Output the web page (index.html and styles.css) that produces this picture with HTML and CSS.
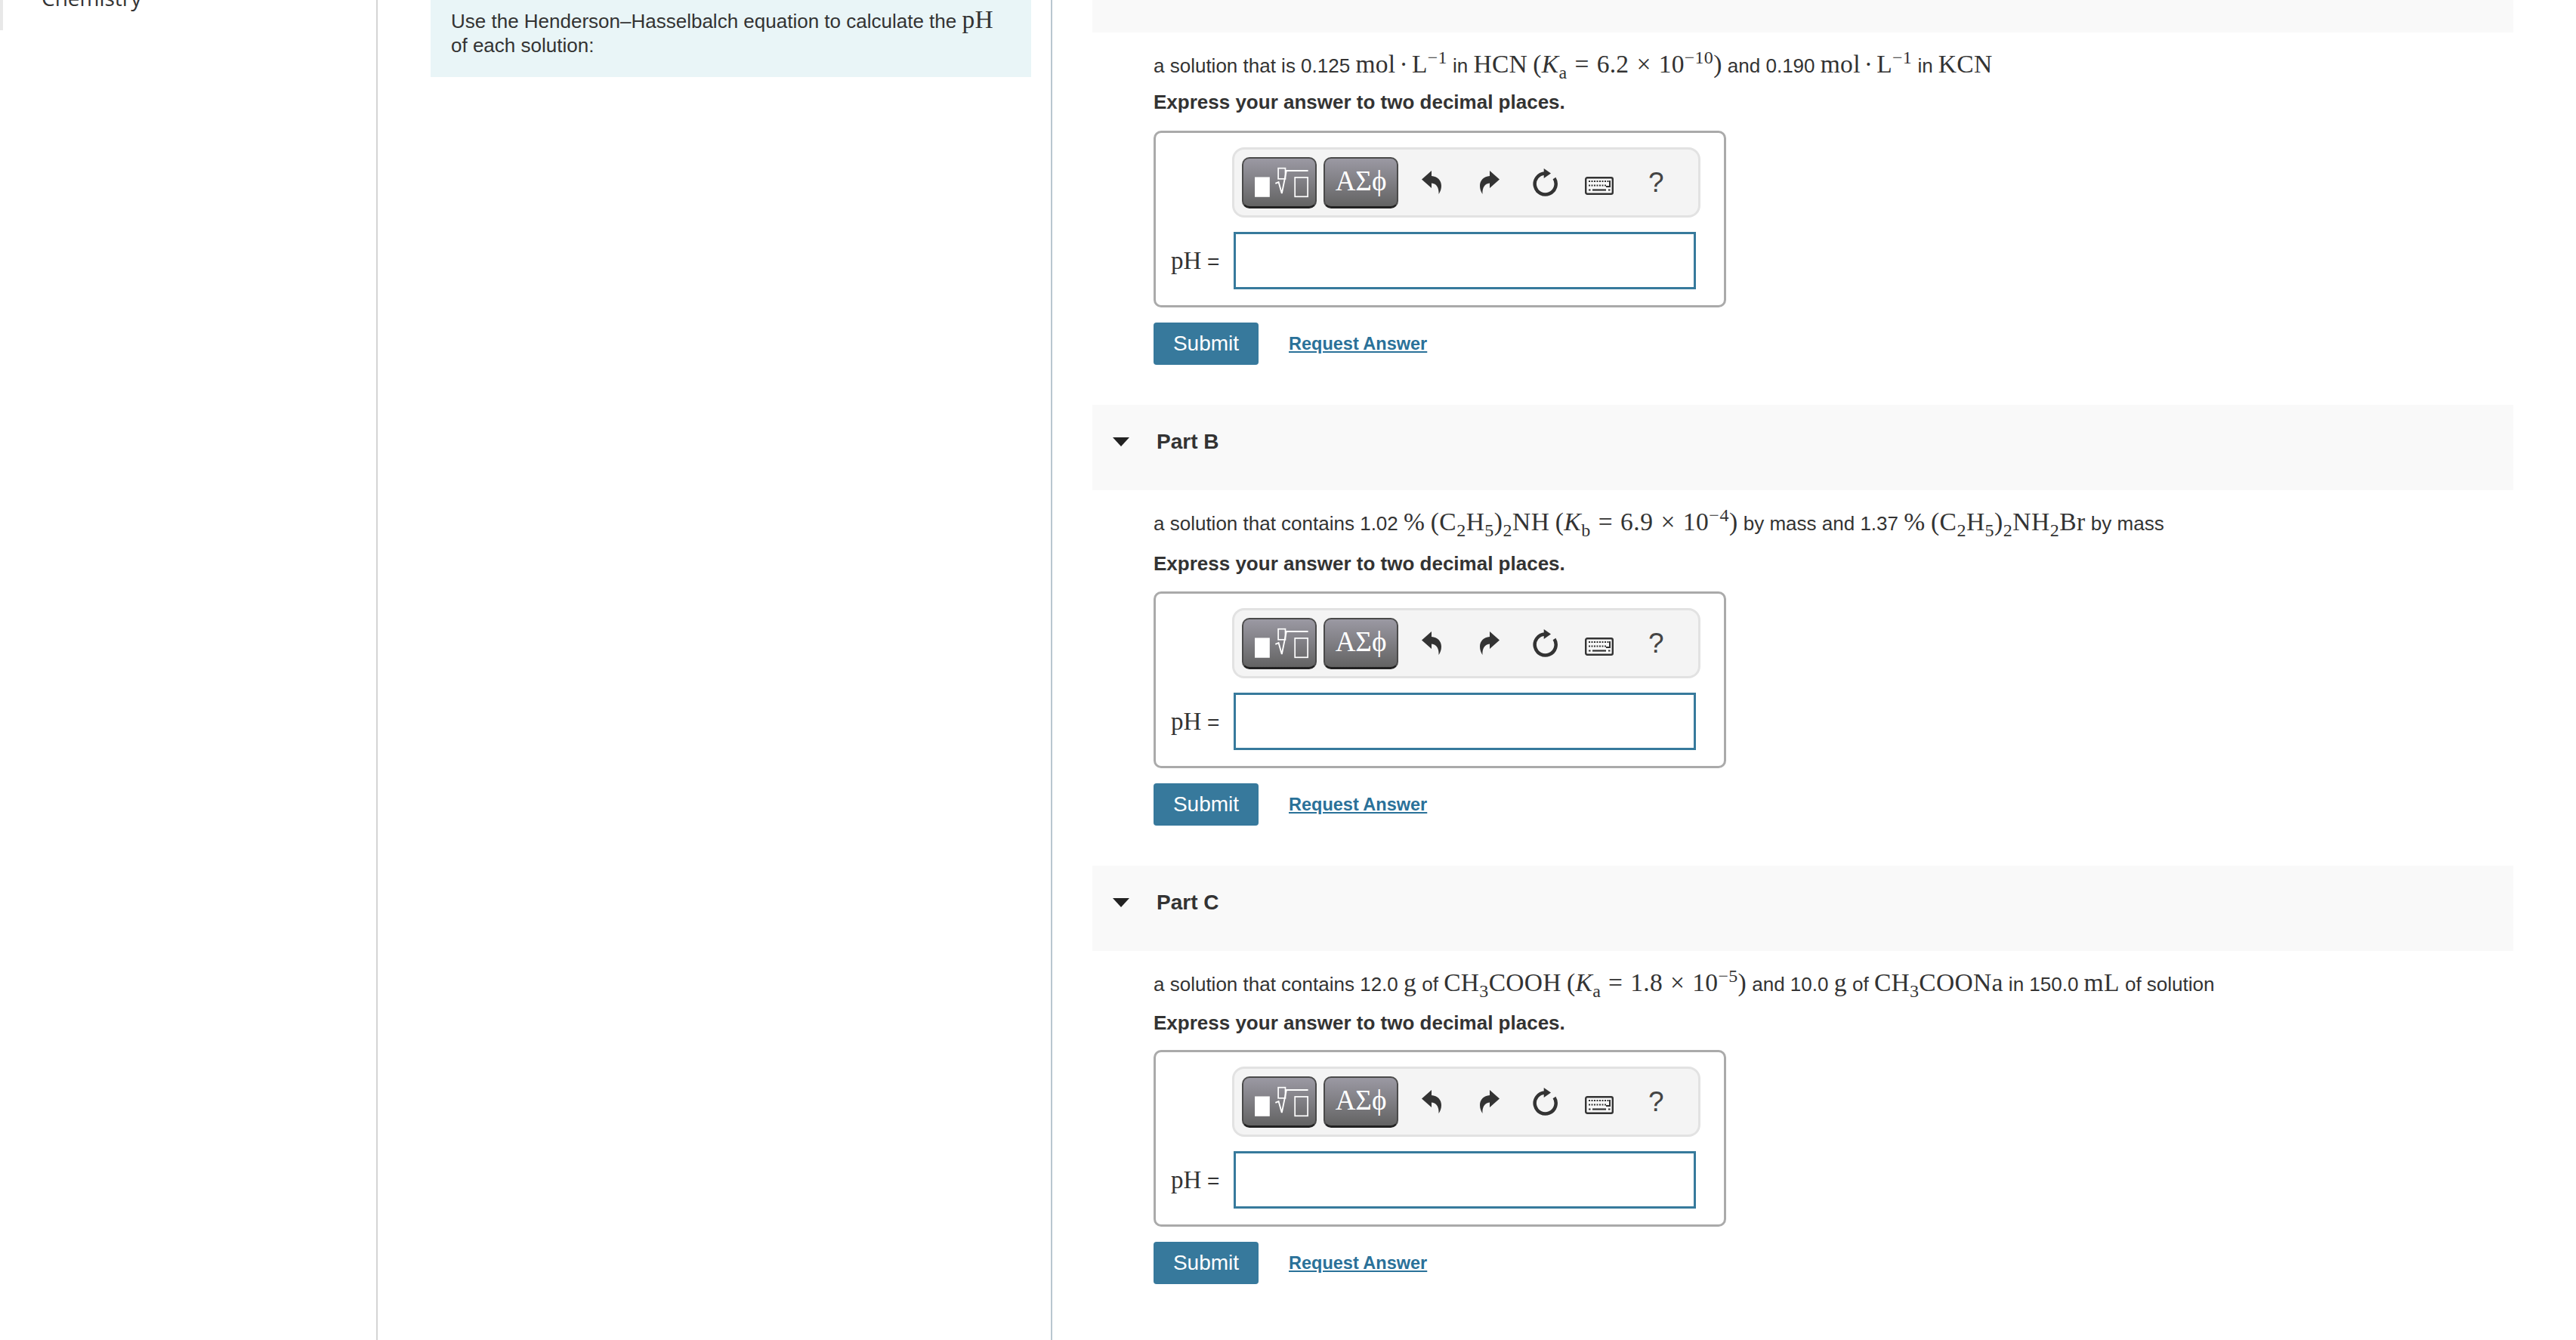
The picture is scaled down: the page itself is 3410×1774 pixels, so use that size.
FILE: index.html
```html
<!DOCTYPE html>
<html lang="en">
<head>
  <meta charset="UTF-8" />
  <title>Henderson-Hasselbalch</title>
  <link rel="stylesheet" href="styles.css">
</head>
<body>
  <svg class="sprite" xmlns="http://www.w3.org/2000/svg">
    <symbol id="i-eq" viewBox="0 0 99 67">
      <rect x="15" y="26" width="21" height="28" fill="#fff"/>
      <rect x="48" y="13.5" width="10" height="15" fill="none" stroke="#fff" stroke-width="1.8"/>
      <polyline points="44,35 48.5,33 53,49 59.5,17 90,17" fill="none" stroke="#fff" stroke-width="2"/>
      <rect x="71.5" y="26.5" width="18" height="27" fill="none" stroke="#fff" stroke-width="1.8"/>
    </symbol>
    <symbol id="i-undo" viewBox="0 0 26 31">
      <path d="M0 11.5 L13 0 V7 C21 7.5 26 13 26 20 C26 24.5 24.500 28 22.500 31 C23 24 20.500 17 13 16.500 V23 Z" fill="#333"/>
    </symbol>
    <symbol id="i-refresh" viewBox="0 0 33 38">
      <path d="M16 6.500 A14 14 0 1 0 28.500 13" fill="none" stroke="#333" stroke-width="4.500"/>
      <polygon points="14.700,0 24,6.500 14.700,13" fill="#333"/>
    </symbol>
    <symbol id="i-keys" viewBox="0 0 38 24">
      <rect x="1.200" y="1.200" width="35.600" height="21.600" rx="2" fill="#f8f8f8" stroke="#333" stroke-width="2.400"/>
      <line x1="5" y1="6" x2="32" y2="6" stroke="#333" stroke-width="2" stroke-dasharray="2 1.500"/>
      <line x1="5" y1="11.500" x2="29" y2="11.500" stroke="#333" stroke-width="2" stroke-dasharray="2 1.500"/>
      <polyline points="33,5 33,13 28,13" fill="none" stroke="#333" stroke-width="2"/>
      <line x1="10" y1="17.500" x2="28" y2="17.500" stroke="#333" stroke-width="2.200"/>
      <line x1="5" y1="17.500" x2="7.500" y2="17.500" stroke="#333" stroke-width="2"/>
      <line x1="31" y1="17.500" x2="33.500" y2="17.500" stroke="#333" stroke-width="2"/>
    </symbol>
  </svg>

  <div class="nav">
    <div class="nav-item">Chemistry</div>
  </div>

  <div class="intro-col">
    <div class="intro">Use the Henderson–Hasselbalch equation to calculate the <span class="m">pH</span> of each solution:</div>
  </div>

  <div class="parts">
    <section class="part part-a">
      <div class="part-head cut"></div>
      <div class="part-body">
        <p class="prompt">a solution that is 0.125 <span class="m">mol<span class="dot">·</span>L<sup>−1</sup></span> in <span class="m">HCN</span> <span class="m">(<i>K</i><sub>a</sub><span class="op">=</span>6.2<span class="op">×</span>10<sup>−10</sup>)</span> and 0.190 <span class="m">mol<span class="dot">·</span>L<sup>−1</sup></span> in <span class="m">KCN</span></p>
        <p class="hint">Express your answer to two decimal places.</p>
        <div class="answer">
          <div class="toolbar">
            <button class="tool"><svg class="ic-eq"><use href="#i-eq"/></svg></button>
            <button class="tool greek">ΑΣϕ</button>
            <svg class="ic-undo"><use href="#i-undo"/></svg>
            <svg class="ic-redo"><use href="#i-undo"/></svg>
            <svg class="ic-refresh"><use href="#i-refresh"/></svg>
            <svg class="ic-keys"><use href="#i-keys"/></svg>
            <span class="help">?</span>
          </div>
          <div class="answer-row">
            <label class="ans-label"><span class="m">pH</span> =</label>
            <input class="ans-input" type="text" />
          </div>
        </div>
        <div class="actions">
          <button class="submit">Submit</button>
          <a class="request" href="#">Request Answer</a>
        </div>
      </div>
    </section>

    <section class="part part-b">
      <div class="part-head"><span class="caret"></span>Part B</div>
      <div class="part-body">
        <p class="prompt">a solution that contains 1.02 <span class="m">%</span> <span class="m">(C<sub>2</sub>H<sub>5</sub>)<sub>2</sub>NH</span> <span class="m">(<i>K</i><sub>b</sub><span class="op">=</span>6.9<span class="op">×</span>10<sup>−4</sup>)</span> by mass and 1.37 <span class="m">%</span> <span class="m">(C<sub>2</sub>H<sub>5</sub>)<sub>2</sub>NH<sub>2</sub>Br</span> by mass</p>
        <p class="hint">Express your answer to two decimal places.</p>
        <div class="answer">
          <div class="toolbar">
            <button class="tool"><svg class="ic-eq"><use href="#i-eq"/></svg></button>
            <button class="tool greek">ΑΣϕ</button>
            <svg class="ic-undo"><use href="#i-undo"/></svg>
            <svg class="ic-redo"><use href="#i-undo"/></svg>
            <svg class="ic-refresh"><use href="#i-refresh"/></svg>
            <svg class="ic-keys"><use href="#i-keys"/></svg>
            <span class="help">?</span>
          </div>
          <div class="answer-row">
            <label class="ans-label"><span class="m">pH</span> =</label>
            <input class="ans-input" type="text" />
          </div>
        </div>
        <div class="actions">
          <button class="submit">Submit</button>
          <a class="request" href="#">Request Answer</a>
        </div>
      </div>
    </section>

    <section class="part part-c">
      <div class="part-head"><span class="caret"></span>Part C</div>
      <div class="part-body">
        <p class="prompt">a solution that contains 12.0 <span class="m">g</span> of <span class="m">CH<sub>3</sub>COOH</span> <span class="m">(<i>K</i><sub>a</sub><span class="op">=</span>1.8<span class="op">×</span>10<sup>−5</sup>)</span> and 10.0 <span class="m">g</span> of <span class="m">CH<sub>3</sub>COONa</span> in 150.0 <span class="m">mL</span> of solution</p>
        <p class="hint">Express your answer to two decimal places.</p>
        <div class="answer">
          <div class="toolbar">
            <button class="tool"><svg class="ic-eq"><use href="#i-eq"/></svg></button>
            <button class="tool greek">ΑΣϕ</button>
            <svg class="ic-undo"><use href="#i-undo"/></svg>
            <svg class="ic-redo"><use href="#i-undo"/></svg>
            <svg class="ic-refresh"><use href="#i-refresh"/></svg>
            <svg class="ic-keys"><use href="#i-keys"/></svg>
            <span class="help">?</span>
          </div>
          <div class="answer-row">
            <label class="ans-label"><span class="m">pH</span> =</label>
            <input class="ans-input" type="text" />
          </div>
        </div>
        <div class="actions">
          <button class="submit">Submit</button>
          <a class="request" href="#">Request Answer</a>
        </div>
      </div>
    </section>
  </div>
</body>
</html>
```

FILE: styles.css
```css
html, body {
  height: 100%;
}

body {
  margin: 0;
  height: 100vh;
  overflow: hidden;
  display: flex;
  background: #fff;
  color: #333;
  font-family: "Liberation Sans", Arial, sans-serif;
  font-size: 26px;
}

.sprite {
  width: 0;
  height: 0;
  display: block;
}

.nav {
  width: 498px;
  flex: none;
  border-right: 2px solid #d4d4d4;
}

.nav-item {
  height: 60px;
  margin-top: -20px;
  padding: 2px 0 0 51px;
  border-left: 4px solid #e8e8e8;
  font-family: "Open Sans", sans-serif;
  font-size: 28px;
  line-height: 30px;
  box-sizing: border-box;
}

.intro-col {
  width: 893px;
  flex: none;
  padding: 0 26px 0 70px;
  box-sizing: border-box;
  border-right: 2px solid #b9c7d0;
}

.intro {
  height: 102px;
  padding: 10px 27px 0;
  box-sizing: border-box;
  background: #e9f5f7;
  line-height: 32px;
}

.parts {
  width: 1881px;
  margin-left: 53px;
  flex: none;
}

.m {
  font-family: "Liberation Serif", serif;
  font-size: 33.500px;
  letter-spacing: 0.300px;
}

.part-b .m {
  letter-spacing: 0.500px;
}

.m sup, .m sub {
  font-size: 24px;
  line-height: 0;
}

.dot {
  margin: 0 5px;
}

.op {
  margin: 0 10px;
}

.part {
  margin-bottom: 53px;
}

.part-head {
  height: 113px;
  background: #f9f9f9;
  display: flex;
  align-items: center;
  padding-left: 27px;
  padding-bottom: 16px;
  box-sizing: border-box;
  font-size: 28px;
  font-weight: bold;
}

.part-head.cut {
  height: 43px;
}

.caret {
  width: 0;
  height: 0;
  margin-right: 36px;
  border-left: 11px solid transparent;
  border-right: 11px solid transparent;
  border-top: 12px solid #222;
}

.part-body {
  padding-left: 81px;
}

.prompt {
  margin: 0;
  padding-top: 22px;
  height: 40px;
  line-height: 40px;
  white-space: nowrap;
}

.hint {
  margin: 0;
  height: 40px;
  line-height: 40px;
  font-weight: bold;
}

.part-a .hint { padding-top: 10px; }
.part-a .answer { margin-top: 18px; }
.part-b .hint { padding-top: 15px; }
.part-b .answer { margin-top: 17px; }
.part-c .hint { padding-top: 13px; }
.part-c .answer { margin-top: 16px; }

.answer {
  width: 758px;
  height: 234px;
  padding: 19px 0 0 101px;
  box-sizing: border-box;
  border: 3px solid #aaa;
  border-radius: 10px;
}

.toolbar {
  width: 620px;
  height: 93px;
  padding: 0 10px;
  box-sizing: border-box;
  display: flex;
  align-items: center;
  background: #f4f4f4;
  border: 3px solid #e2e2e2;
  border-radius: 16px;
}

.tool {
  width: 99px;
  height: 68px;
  margin-right: 9px;
  padding: 0;
  flex: none;
  border: 2px solid #4a4a4a;
  border-bottom: 3px solid #222;
  border-radius: 10px;
  background: linear-gradient(#9b99a3, #636363);
  cursor: pointer;
}

.ic-eq {
  width: 95px;
  height: 63px;
  display: block;
}

.greek {
  color: #fff;
  font-family: "Liberation Serif", serif;
  font-size: 37px;
  padding-bottom: 3px;
}

.ic-undo {
  width: 26px;
  height: 31px;
  margin-left: 22px;
}

.ic-redo {
  width: 26px;
  height: 31px;
  margin-left: 51px;
  transform: scaleX(-1);
}

.ic-refresh {
  width: 33px;
  height: 38px;
  margin-left: 44px;
}

.ic-keys {
  width: 38px;
  height: 24px;
  margin-left: 36px;
  margin-top: 9px;
}

.help {
  margin-left: 46px;
  font-size: 37px;
  font-weight: normal;
  color: #444;
}

.answer-row {
  display: flex;
  align-items: center;
  margin-top: 19px;
  margin-left: -81px;
}

.ans-label {
  width: 83px;
  white-space: nowrap;
  font-size: 28px;
}

.ans-label .m {
  font-size: 33px;
  letter-spacing: 0;
}

.ans-input {
  width: 612px;
  height: 76px;
  box-sizing: border-box;
  border: 3px solid #377a9c;
  background: #fff;
  outline: none;
}

.actions {
  display: flex;
  align-items: center;
  margin-top: 20px;
}

.submit {
  width: 139px;
  height: 56px;
  padding: 0;
  border: none;
  border-radius: 4px;
  background: #37799c;
  color: #fff;
  font-family: "Liberation Sans", Arial, sans-serif;
  font-size: 28px;
  cursor: pointer;
}

.request {
  margin-left: 40px;
  color: #2a7199;
  font-size: 23.500px;
  font-weight: bold;
}
```
